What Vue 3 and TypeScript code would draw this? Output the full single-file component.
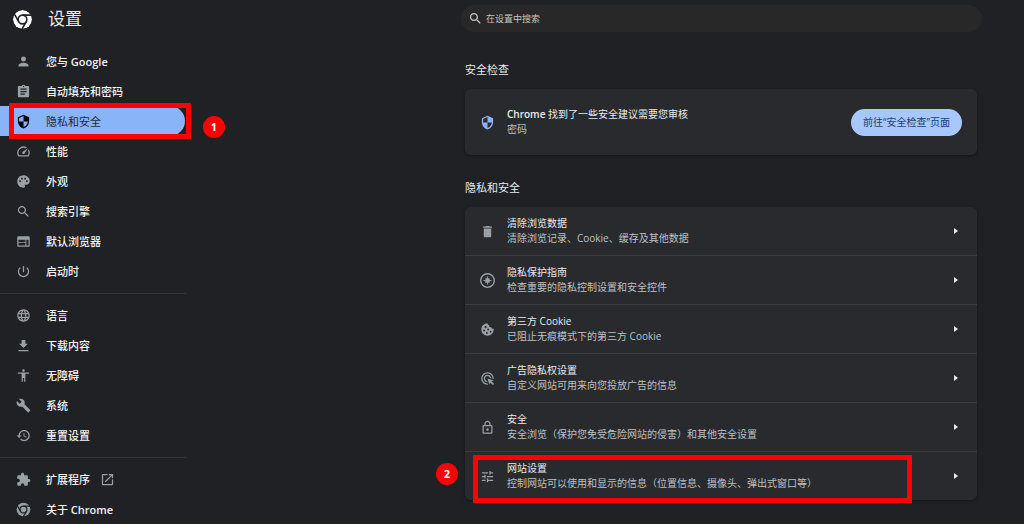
<script setup lang="ts">
import { ref } from 'vue'

interface NavItem {
  id: string
  label: string
  brand?: string
  icon: string
  external?: boolean
  step?: number
}

interface SettingRow {
  title: string
  detail: string
  icon: string
  step?: number
}

const icons: Record<string, string> = {
  person: 'M12 12c2.21 0 4-1.79 4-4s-1.79-4-4-4-4 1.79-4 4 1.79 4 4 4zm0 2c-2.67 0-8 1.34-8 4v2h16v-2c0-2.66-5.33-4-8-4z',
  clipboard: 'M19 3h-4.18C14.4 1.84 13.3 1 12 1c-1.3 0-2.4.84-2.82 2H5c-1.1 0-2 .9-2 2v14c0 1.1.9 2 2 2h14c1.1 0 2-.9 2-2V5c0-1.1-.9-2-2-2zm-7 0c.55 0 1 .45 1 1s-.45 1-1 1-1-.45-1-1 .45-1 1-1zm2 14H7v-2h7v2zm3-4H7v-2h10v2zm0-4H7V7h10v2z',
  shield: 'M12 1L3 5v6c0 5.55 3.84 10.74 9 12 5.16-1.26 9-6.45 9-12V5l-9-4zm0 10.99h7c-.53 4.12-3.28 7.79-7 8.94V12H5V6.3l7-3.11v8.8z',
  speed: 'M20.38 8.57l-1.23 1.85a8 8 0 0 1-.22 7.58H5.07A8 8 0 0 1 15.58 6.85l1.85-1.23A10 10 0 0 0 3.35 19a2 2 0 0 0 1.72 1h13.85a2 2 0 0 0 1.74-1 10 10 0 0 0-.27-10.44zm-9.79 6.84a2 2 0 0 0 2.83 0l5.66-8.49-8.49 5.66a2 2 0 0 0 0 2.83z',
  palette: 'M12 2C6.49 2 2 6.49 2 12s4.49 10 10 10c1.38 0 2.5-1.12 2.5-2.5 0-.61-.23-1.2-.64-1.67-.08-.1-.13-.21-.13-.33 0-.28.22-.5.5-.5H16c3.31 0 6-2.69 6-6 0-4.96-4.49-9-10-9zm-5.5 11c-.83 0-1.5-.67-1.5-1.5S5.67 10 6.5 10s1.5.67 1.5 1.5S7.33 13 6.5 13zm3-4C8.67 9 8 8.33 8 7.5S8.67 6 9.5 6s1.5.67 1.5 1.5S10.33 9 9.5 9zm5 0c-.83 0-1.5-.67-1.5-1.5S13.67 6 14.5 6s1.5.67 1.5 1.5S15.33 9 14.5 9zm3 4c-.83 0-1.5-.67-1.5-1.5s.67-1.5 1.5-1.5 1.5.67 1.5 1.5-.67 1.5-1.5 1.5z',
  search: 'M15.5 14h-.79l-.28-.27C15.41 12.59 16 11.11 16 9.5 16 5.91 13.09 3 9.5 3S3 5.91 3 9.5 5.91 16 9.5 16c1.61 0 3.09-.59 4.23-1.57l.27.28v.79l5 4.99L20.49 19l-4.99-5zm-6 0C7.01 14 5 11.99 5 9.5S7.01 5 9.5 5 14 7.01 14 9.5 11.99 14 9.5 14z',
  browser: 'M20 3.500H4c-1.100 0-2 .9-2 2v13c0 1.100.9 2 2 2h16c1.100 0 2-.9 2-2v-13c0-1.100-.9-2-2-2zm-5 15H4v-4h11v4zm0-5.500H4V9h11v4zm5 5.500h-3.500V9H20v9.500z',
  power: 'M13 3h-2v10h2V3zm4.83 2.17l-1.42 1.42C17.99 7.86 19 9.81 19 12c0 3.87-3.13 7-7 7s-7-3.13-7-7c0-2.19 1.01-4.14 2.58-5.42L6.17 5.17C4.23 6.82 3 9.26 3 12c0 4.97 4.03 9 9 9s9-4.03 9-9c0-2.74-1.23-5.18-3.17-6.83z',
  globe: 'M11.99 2C6.47 2 2 6.48 2 12s4.47 10 9.99 10C17.52 22 22 17.52 22 12S17.52 2 11.99 2zm6.93 6h-2.95c-.32-1.25-.78-2.45-1.38-3.56 1.84.63 3.37 1.91 4.33 3.56zM12 4.04c.83 1.2 1.48 2.53 1.91 3.96h-3.82c.43-1.43 1.08-2.76 1.91-3.96zM4.26 14C4.1 13.36 4 12.69 4 12s.1-1.36.26-2h3.38c-.08.66-.14 1.32-.14 2 0 .68.06 1.34.14 2H4.26zm.82 2h2.95c.32 1.25.78 2.45 1.38 3.56-1.84-.63-3.37-1.9-4.33-3.56zm2.95-8H5.08c.96-1.66 2.49-2.93 4.33-3.56C8.81 5.55 8.35 6.75 8.03 8zM12 19.96c-.83-1.2-1.48-2.53-1.91-3.96h3.82c-.43 1.43-1.08 2.76-1.91 3.96zM14.34 14H9.66c-.09-.66-.16-1.32-.16-2 0-.68.07-1.35.16-2h4.68c.09.65.16 1.32.16 2 0 .68-.07 1.34-.16 2zm.25 5.56c.6-1.11 1.06-2.31 1.38-3.56h2.95c-.96 1.65-2.49 2.93-4.33 3.56zM16.36 14c.08-.66.14-1.32.14-2 0-.68-.06-1.34-.14-2h3.38c.16.64.26 1.31.26 2s-.1 1.36-.26 2h-3.38z',
  download: 'M19 9h-4V3H9v6H5l7 7 7-7zM4 19v2h16v-2H4z',
  accessibility: 'M12 2c1.1 0 2 .9 2 2s-.9 2-2 2-2-.9-2-2 .9-2 2-2zm9 7h-6v13h-2v-6h-2v6H9V9H3V7h18v2z',
  wrench: 'M22.7 19l-9.1-9.1c.9-2.3.4-5-1.5-6.9-2-2-5-2.4-7.4-1.3L9 6 6 9 1.6 4.7C.4 7.1.9 10.1 2.9 12.1c1.9 1.9 4.6 2.4 6.9 1.5l9.1 9.1c.4.4 1 .4 1.4 0l2.3-2.3c.5-.4.5-1.1.1-1.4z',
  history: 'M13 3c-4.97 0-9 4.03-9 9H1l3.89 3.89.07.14L9 12H6c0-3.87 3.13-7 7-7s7 3.13 7 7-3.13 7-7 7c-1.93 0-3.68-.79-4.94-2.06l-1.42 1.42C8.27 19.99 10.51 21 13 21c4.97 0 9-4.03 9-9s-4.03-9-9-9zm-1 5v5l4.28 2.54.72-1.21-3.5-2.08V8H12z',
  puzzle: 'M20.5 11H19V7c0-1.1-.9-2-2-2h-4V3.5C13 2.12 11.88 1 10.5 1S8 2.12 8 3.5V5H4c-1.1 0-1.99.9-1.99 2v3.8H3.5c1.49 0 2.7 1.21 2.7 2.7s-1.21 2.7-2.7 2.7H2V20c0 1.1.9 2 2 2h3.8v-1.5c0-1.49 1.21-2.7 2.7-2.7 1.49 0 2.7 1.21 2.7 2.7V22H17c1.1 0 2-.9 2-2v-4h1.5c1.38 0 2.5-1.12 2.5-2.5S21.88 11 20.5 11z',
  external: 'M19 19H5V5h7V3H5c-1.11 0-2 .9-2 2v14c0 1.1.89 2 2 2h14c1.1 0 2-.9 2-2v-7h-2v7zM14 3v2h3.59l-9.83 9.83 1.41 1.41L19 6.41V10h2V3h-7z',
  trash: 'M6 19c0 1.1.9 2 2 2h8c1.1 0 2-.9 2-2V7H6v12zM19 4h-3.5l-1-1h-5l-1 1H5v2h14V4z',
  compass: 'M12 0a12 12 0 1 0 0 24 12 12 0 0 0 0-24zm0 2.200a9.800 9.800 0 1 1 0 19.600 9.800 9.800 0 0 1 0-19.600zM12 4.500l-1.400 4.400-2.400-.7.7 2.400L4.500 12l4.400 1.400-.7 2.400 2.400-.7L12 19.500l1.400-4.400 2.400.7-.7-2.400 4.400-1.400-4.400-1.400.7-2.400-2.400.7z',
  cookie: 'M12 2a10 10 0 1 0 10 10c0-.5 0-.9-.1-1.300-1.600.6-3.300-.3-3.700-2-2.300.2-4-1.500-3.600-3.600C12.800 4.900 11.800 3.500 12 2zM9 6.500a1.700 1.700 0 1 1 0 3.400 1.700 1.700 0 0 1 0-3.400zM6.500 12a1.500 1.500 0 1 1 0 3 1.500 1.500 0 0 1 0-3zM13 10.500a1.500 1.500 0 1 1 0 3 1.500 1.500 0 0 1 0-3zM11 16a1.500 1.500 0 1 1 0 3 1.500 1.500 0 0 1 0-3zM17 14a1.500 1.500 0 1 1 0 3 1.500 1.500 0 0 1 0-3z',
  adsClick: 'M11.710 17.990C8.530 17.840 6 15.220 6 12c0-3.310 2.690-6 6-6 3.220 0 5.840 2.530 5.990 5.710l-2.100-.63C15.480 9.310 13.890 8 12 8c-2.210 0-4 1.790-4 4 0 1.890 1.310 3.480 3.080 3.890l.63 2.100zM22 12c0 .3-.01.6-.04.9l-1.970-.59c.01-.1.01-.21.01-.31 0-4.420-3.580-8-8-8s-8 3.580-8 8 3.580 8 8 8c.1 0 .21 0 .31-.01l.59 1.970c-.3.03-.6.04-.9.04-5.520 0-10-4.480-10-10S6.480 2 12 2s10 4.480 10 10zm-3.770 4.260L22 15l-10-3 3 10 1.260-3.770 4.270 4.270 1.980-1.980-4.280-4.260z',
  lock: 'M18 8h-1V6c0-2.760-2.240-5-5-5S7 3.240 7 6v2H6c-1.100 0-2 .9-2 2v10c0 1.100.9 2 2 2h12c1.100 0 2-.9 2-2V10c0-1.100-.9-2-2-2zM9 6c0-1.660 1.340-3 3-3s3 1.340 3 3v2H9V6zm9 14H6V10h12v10zm-6-3c1.100 0 2-.9 2-2s-.9-2-2-2-2 .9-2 2 .9 2 2 2z',
  tune: 'M3 17v2h6v-2H3zM3 5v2h10V5H3zm10 16v-2h8v-2h-8v-2h-2v6h2zM7 9v2H3v2h4v2h2V9H7zm14 4v-2H11v2h10zm-6-4h2V7h4V5h-4V3h-2v6z',
}

const navGroups: NavItem[][] = [
  [
    { id: 'people', label: '您与', brand: 'Google', icon: 'person' },
    { id: 'autofill', label: '自动填充和密码', icon: 'clipboard' },
    { id: 'privacy', label: '隐私和安全', icon: 'shield', step: 1 },
    { id: 'performance', label: '性能', icon: 'speed' },
    { id: 'appearance', label: '外观', icon: 'palette' },
    { id: 'search', label: '搜索引擎', icon: 'search' },
    { id: 'default', label: '默认浏览器', icon: 'browser' },
    { id: 'startup', label: '启动时', icon: 'power' },
  ],
  [
    { id: 'languages', label: '语言', icon: 'globe' },
    { id: 'downloads', label: '下载内容', icon: 'download' },
    { id: 'accessibility', label: '无障碍', icon: 'accessibility' },
    { id: 'system', label: '系统', icon: 'wrench' },
    { id: 'reset', label: '重置设置', icon: 'history' },
  ],
  [
    { id: 'extensions', label: '扩展程序', icon: 'puzzle', external: true },
    { id: 'about', label: '关于', brand: 'Chrome', icon: 'chrome' },
  ],
]

const rows: SettingRow[] = [
  { title: '清除浏览数据', detail: '清除浏览记录、Cookie、缓存及其他数据', icon: 'trash' },
  { title: '隐私保护指南', detail: '检查重要的隐私控制设置和安全控件', icon: 'compass' },
  { title: '第三方 Cookie', detail: '已阻止无痕模式下的第三方 Cookie', icon: 'cookie' },
  { title: '广告隐私权设置', detail: '自定义网站可用来向您投放广告的信息', icon: 'adsClick' },
  { title: '安全', detail: '安全浏览（保护您免受危险网站的侵害）和其他安全设置', icon: 'lock' },
  { title: '网站设置', detail: '控制网站可以使用和显示的信息（位置信息、摄像头、弹出式窗口等）', icon: 'tune', step: 2 },
]

const selected = ref('privacy')
const query = ref('')
</script>

<template>
  <div class="page">
    <aside class="sidebar">
      <header class="brand">
        <svg class="logo" viewBox="0 0 24 24" aria-hidden="true">
          <circle cx="12" cy="12" r="12" fill="currentColor" />
          <g class="seam">
            <circle cx="12" cy="12" r="5.5" />
            <path d="M12 6.5H23M7.240 14.750L1.740 5.220M16.760 14.750L11.260 24.280" />
          </g>
        </svg>
        <h1>设置</h1>
      </header>
      <nav>
        <ul v-for="(group, g) in navGroups" :key="g" class="group">
          <li v-for="item in group" :key="item.id" class="nav-row">
            <a
              :href="'#' + item.id"
              class="nav-link"
              :class="{ active: item.id === selected }"
              @click="selected = item.id"
            >
              <svg v-if="item.icon === 'chrome'" class="icon" viewBox="0 0 24 24" aria-hidden="true">
                <circle cx="12" cy="12" r="11" fill="currentColor" />
                <g class="seam">
                  <circle cx="12" cy="12" r="5.5" />
                  <path d="M12 6.5H23M7.240 14.750L1.740 5.220M16.760 14.750L11.260 24.280" />
                </g>
              </svg>
              <svg v-else class="icon" viewBox="0 0 24 24" aria-hidden="true">
                <path :d="icons[item.icon]" />
              </svg>
              <span>{{ item.label }}<template v-if="item.brand">{{ ' ' }}<b>{{ item.brand }}</b></template></span>
              <svg v-if="item.external" class="icon external" viewBox="0 0 24 24" aria-hidden="true">
                <path :d="icons.external" />
              </svg>
            </a>
            <template v-if="item.step">
              <span class="frame nav-frame"></span>
              <span class="step nav-step">{{ item.step }}</span>
            </template>
          </li>
        </ul>
      </nav>
    </aside>

    <main class="content">
      <label class="search">
        <svg class="icon" viewBox="0 0 24 24" aria-hidden="true"><path :d="icons.search" /></svg>
        <input v-model="query" type="text" placeholder="在设置中搜索" aria-label="在设置中搜索" />
      </label>

      <section class="section">
        <h2>安全检查</h2>
        <div class="card check">
          <svg class="icon accent" viewBox="0 0 24 24" aria-hidden="true"><path :d="icons.shield" /></svg>
          <div class="text">
            <p class="title"><b>Chrome</b> 找到了一些安全建议需要您审核</p>
            <p class="detail">密码</p>
          </div>
          <button type="button" class="action">前往“安全检查”页面</button>
        </div>
      </section>

      <section class="section">
        <h2>隐私和安全</h2>
        <ul class="card">
          <li v-for="row in rows" :key="row.title" class="setting">
            <button type="button" class="setting-button">
              <svg class="icon" viewBox="0 0 24 24" aria-hidden="true">
                <path fill-rule="evenodd" :d="icons[row.icon]" />
              </svg>
              <span class="text">
                <span class="title">{{ row.title }}</span>
                <span class="detail">{{ row.detail }}</span>
              </span>
              <svg class="arrow" viewBox="0 0 4 6" aria-hidden="true"><path d="M0 0L4 3L0 6z" /></svg>
            </button>
            <template v-if="row.step">
              <span class="frame row-frame"></span>
              <span class="step row-step">{{ row.step }}</span>
            </template>
          </li>
        </ul>
      </section>
    </main>
  </div>
</template>

<style>
html,
body {
  margin: 0;
  background: #202124;
}
</style>

<style scoped>
.page {
  display: flex;
  min-height: 100vh;
  box-sizing: border-box;
  overflow: hidden;
  background: #202124;
  color: #e8eaed;
  font-family: "Open Sans", "Noto Sans CJK SC", sans-serif;
  font-size: 10px;
  line-height: 15px;
}

h1,
h2,
p,
ul {
  margin: 0;
  padding: 0;
  font-weight: 400;
  list-style: none;
}

b {
  font-weight: 600;
}

.sidebar {
  flex: 0 0 186px;
}

.brand {
  display: flex;
  align-items: center;
  gap: 16px;
  height: 38px;
  margin-bottom: 8px;
  padding-left: 13px;
}

.logo {
  width: 19px;
  height: 19px;
  border-radius: 50%;
  color: #fff;
}

.seam {
  fill: none;
  stroke: #202124;
  stroke-width: 2;
}

h1 {
  font-size: 17px;
  line-height: 24px;
}

.group + .group {
  margin-top: 7px;
  padding-top: 6px;
  border-top: 1px solid #35363a;
}

.nav-row {
  position: relative;
}

.nav-link {
  display: flex;
  align-items: center;
  gap: 15px;
  height: 30px;
  margin-right: 1px;
  padding-left: 16px;
  border-radius: 0 15px 15px 0;
  color: #f1f3f4;
  font-size: 11px;
  font-weight: 500;
  text-decoration: none;
}

.nav-link.active {
  background: #8ab4f8;
  color: #202a40;
  font-weight: 400;
}

.icon {
  flex: none;
  width: 15px;
  height: 15px;
  color: #9aa0a6;
  fill: currentColor;
}

.icon.external {
  margin-left: -5px;
}

.nav-link.active .icon {
  color: #000;
}

.icon.accent {
  color: #8ab4f8;
}

.content {
  flex: 0 1 521px;
  min-width: 0;
  margin: 5px 42px 24px auto;
}

.search {
  display: flex;
  align-items: center;
  gap: 3px;
  height: 27px;
  padding: 0 7px;
  border-radius: 14px;
  background: #282828;
}

.search .icon {
  color: #c4c7c5;
}

.search input {
  flex: 1;
  min-width: 0;
  padding: 0;
  border: 0;
  outline: 0;
  background: none;
  color: #e8eaed;
  font: inherit;
  font-size: 9px;
}

.search input::placeholder {
  color: #c4c7c5;
  opacity: 1;
}

.section {
  margin: 25px 5px 0 4px;
}

.search + .section {
  margin-top: 30px;
}

h2 {
  margin-bottom: 11px;
  font-size: 11px;
  line-height: 16px;
}

.card {
  border-radius: 6px;
  background: #292a2d;
  box-shadow: 0 1px 3px rgba(0, 0, 0, 0.4);
}

.check {
  display: flex;
  align-items: center;
  gap: 12px;
  height: 66px;
  padding: 0 15px;
}

.text {
  display: flex;
  flex: 1;
  flex-direction: column;
  min-width: 0;
}

.title {
  color: #e8eaed;
}

.detail {
  color: #bdc1c6;
}

.action {
  height: 27px;
  padding: 0 12px;
  border: 0;
  border-radius: 14px;
  background: #a8c7fa;
  color: #1b4079;
  font: inherit;
}

.setting {
  position: relative;
}

.setting + .setting {
  border-top: 1px solid #3c3d41;
}

.setting-button {
  display: flex;
  align-items: center;
  gap: 12px;
  width: 100%;
  height: 48px;
  padding: 0 19px 0 15px;
  border: 0;
  background: none;
  color: inherit;
  font: inherit;
  text-align: left;
}

.arrow {
  width: 4px;
  height: 6px;
  fill: #e8eaed;
}

/* Numbered red callouts lying over the interface */
.frame {
  position: absolute;
  box-sizing: border-box;
  border: 5px solid #fe0000;
  pointer-events: none;
}

.nav-frame {
  top: -3px;
  right: -5px;
  bottom: -3px;
  left: 9px;
}

.row-frame {
  top: 3px;
  right: 65px;
  bottom: -3px;
  left: 8px;
}

.step {
  position: absolute;
  width: 22px;
  height: 22px;
  border-radius: 50%;
  background: #fe0000;
  color: #fff;
  font-size: 11px;
  font-weight: 700;
  line-height: 22px;
  text-align: center;
}

.nav-step {
  top: 10px;
  left: 203px;
}

.row-step {
  top: 11px;
  left: -29px;
}
</style>
